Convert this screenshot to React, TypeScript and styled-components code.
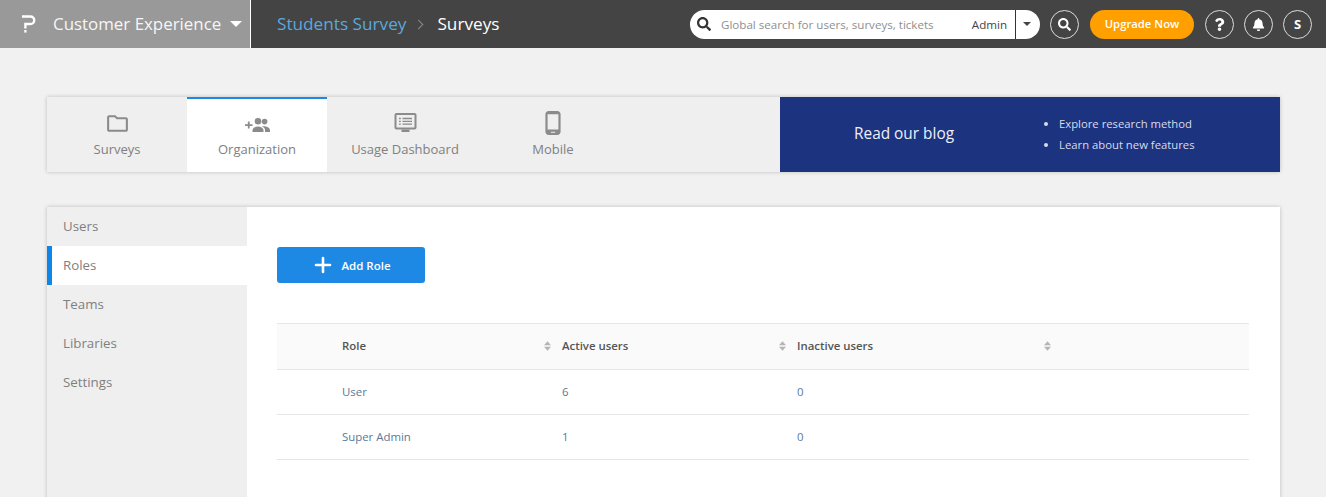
import { ReactNode } from "react";
import { createGlobalStyle, styled } from "styled-components";
import { FaBell, FaQuestion, FaSearch } from "react-icons/fa";
import { MdOutlineFolder, MdOutlinePhoneAndroid } from "react-icons/md";
import { FiPlus } from "react-icons/fi";

const GlobalStyle = createGlobalStyle`
  html, body {
    margin: 0;
    height: 100%;
    overflow: hidden;
    background: #f1f1f1;
    font-family: "Open Sans", "Noto Sans", sans-serif;
  }
  * { box-sizing: border-box; }
`;

const Header = styled.header`
  display: flex;
  align-items: center;
  height: 48px;
  background: #444;
  color: #fff;
`;

const Brand = styled.div`
  display: flex;
  align-items: center;
  width: 251px;
  height: 100%;
  padding-left: 22px;
  background: #999;
  border-right: 1px solid #fff;
`;

const BrandName = styled.span`
  margin-left: 17px;
  padding-bottom: 2px;
  font-size: 16.9px;
  color: #f6f6f6;
`;

const Caret = styled.span<{ $color?: string; $size?: number; $gap?: number }>`
  width: 0;
  height: 0;
  margin-left: ${(p) => p.$gap ?? 0}px;
  border-left: ${(p) => p.$size ?? 6}px solid transparent;
  border-right: ${(p) => p.$size ?? 6}px solid transparent;
  border-top: ${(p) => p.$size ?? 6}px solid ${(p) => p.$color ?? "#fff"};
`;

const Crumbs = styled.nav`
  display: flex;
  align-items: center;
  margin-left: 26px;
  padding-bottom: 2px;
  font-size: 17.2px;
`;

const CrumbLink = styled.a`
  color: #5aa9dc;
`;

const CrumbSep = styled.span`
  display: inline-block;
  width: 7px;
  height: 7px;
  margin: 2px 15px 0 9px;
  border-top: 1px solid #888;
  border-right: 1px solid #888;
  transform: rotate(45deg);
`;

const HeaderRight = styled.div`
  display: flex;
  align-items: center;
  margin-left: auto;
  padding-right: 14px;
`;

const SearchBox = styled.div`
  display: flex;
  align-items: center;
  width: 350px;
  height: 29px;
  padding-left: 7px;
  background: #fff;
  border-radius: 15px;
  color: #333;
  font-size: 11.6px;
`;

const SearchHint = styled.span`
  margin-left: 10px;
  color: #8f8f8f;
  flex: 1;
`;

const SearchScope = styled.span`
  padding-right: 8px;
  color: #444;
`;

const ScopeToggle = styled.span`
  display: flex;
  align-items: center;
  justify-content: center;
  width: 25px;
  height: 100%;
  padding-right: 2px;
  border-left: 1px solid #333;
`;

const RoundButton = styled.button`
  display: flex;
  align-items: center;
  justify-content: center;
  width: 29px;
  height: 29px;
  margin-left: 10px;
  padding: 0;
  background: transparent;
  border: 1px solid #ddd;
  border-radius: 50%;
  color: #fff;
  font: 700 13px "Open Sans", sans-serif;
`;

const UpgradeButton = styled.button`
  width: 104px;
  height: 29px;
  margin: 0 1px 0 11px;
  padding: 0 0 2px;
  background: #ff9f00;
  border: 0;
  border-radius: 15px;
  color: #fff;
  font: 600 11.3px "Open Sans", sans-serif;
`;

const Page = styled.main`
  padding: 49px 46px 0 47px;
`;

const TabCard = styled.section`
  display: flex;
  height: 75px;
  background: #efefef;
  box-shadow: 0 0 4px rgba(0, 0, 0, 0.22);
`;

const Tab = styled.a<{ $width: number; $active?: boolean }>`
  display: flex;
  flex-direction: column;
  align-items: center;
  width: ${(p) => p.$width}px;
  padding-top: ${(p) => (p.$active ? 12 : 14)}px;
  background: ${(p) => (p.$active ? "#fff" : "transparent")};
  border-top: ${(p) => (p.$active ? "2px solid #1e88e5" : "0")};
`;

const TabIcon = styled.span`
  display: flex;
  align-items: center;
  justify-content: center;
  height: 24px;
  color: #8b8b8b;
`;

const TabLabel = styled.span`
  margin-top: 5px;
  font-size: 13px;
  line-height: 19px;
  color: #808080;
`;

const BlogBanner = styled.aside`
  display: flex;
  align-items: center;
  width: 500px;
  margin-left: auto;
  background: #1c3380;
  color: #fff;
`;

const BlogTitle = styled.span`
  width: 262px;
  padding: 0 0 3px 74px;
  font-size: 15.4px;
  color: #eef0f8;
`;

const BlogList = styled.ul`
  margin: 0;
  padding: 0 0 2px 17px;
  font-size: 11.3px;
  line-height: 21px;
  color: #d7dcec;
`;

const ContentCard = styled.section`
  display: flex;
  height: 400px;
  margin-top: 35px;
  background: #fff;
  box-shadow: 0 0 4px rgba(0, 0, 0, 0.22);
`;

const SideNav = styled.nav`
  flex: none;
  width: 200px;
  background: #efefef;
`;

const SideItem = styled.a<{ $active?: boolean }>`
  display: flex;
  align-items: center;
  height: 39px;
  padding: 0 0 2px ${(p) => (p.$active ? 11 : 16)}px;
  background: ${(p) => (p.$active ? "#fff" : "transparent")};
  border-left: ${(p) => (p.$active ? "5px solid #0e85e8" : "0")};
  color: #7f7f7f;
  font-size: 13.3px;
`;

const Main = styled.div`
  flex: 1;
  padding: 40px 31px 0 30px;
`;

const AddButton = styled.button`
  display: flex;
  align-items: center;
  justify-content: center;
  gap: 6px;
  width: 148px;
  height: 36px;
  padding: 0;
  background: #1e88e5;
  border: 0;
  border-radius: 3px;
  color: #fff;
  font: 600 11.5px "Open Sans", sans-serif;
`;

const Table = styled.div`
  margin-top: 40px;
  border-top: 1px solid #e6e6e6;
`;

const Row = styled.div<{ $head?: boolean }>`
  display: grid;
  grid-template-columns: 280px 235px 265px 1fr;
  align-items: center;
  height: ${(p) => (p.$head ? 46 : 45)}px;
  background: ${(p) => (p.$head ? "#fafafa" : "transparent")};
  border-bottom: 1px solid #e6e6e6;
`;

const Cell = styled.div<{ $first?: boolean; $head?: boolean }>`
  display: flex;
  align-items: center;
  justify-content: space-between;
  padding: 0 6px 2px ${(p) => (p.$first ? 65 : 5)}px;
  font-size: 11.4px;
  font-weight: ${(p) => (p.$head ? 600 : 400)};
  color: ${(p) => (p.$head ? "#555" : "#5a789a")};
`;

const GroupIconFrame = styled.svg`
  margin-top: 3px;
`;

const SortMark = () => (
  <svg width="7" height="10" viewBox="0 0 8 11" fill="#b5b5b5">
    <path d="M4 0 8 4.6H0zM0 6.4h8L4 11z" />
  </svg>
);

const Logo = () => (
  <svg width="14" height="18" viewBox="0 0 14 18" fill="none" stroke="#fff" strokeWidth="2.4">
    <path d="M0 1.5h8.5a3.6 3.6 0 0 1 0 7.5H3.4v4.4" />
    <rect x="2.3" y="15" width="2.2" height="2.6" fill="#fff" stroke="none" />
  </svg>
);

const GroupAddIcon = () => (
  <GroupIconFrame width="25" height="14" viewBox="0 0 25 14" fill="#8b8b8b">
    <path d="M0 6.2h7.5V8H0zM2.85 3.4h1.8v7.2h-1.8z" />
    <circle cx="13" cy="3.3" r="3.3" />
    <path d="M7.5 14v-1.6c0-2.7 3.5-4 5.5-4s5.5 1.3 5.5 4V14z" />
    <circle cx="19.6" cy="3.6" r="2.8" />
    <path d="M17 8.5c3-.6 8 .8 8 3.7V14h-5v-1.8c0-1.5-1-2.8-3-3.7z" />
  </GroupIconFrame>
);

const DashboardIcon = () => (
  <svg width="23" height="20" viewBox="0 0 22 20" fill="none" stroke="#8b8b8b">
    <rect x="1" y="1" width="20" height="14.5" rx="1" strokeWidth="2" />
    <path d="M4.5 5.5h1.8M8 5.5h9.5M4.5 8.3h1.8M8 8.3h9.5M4.5 11.1h1.8M8 11.1h9.5" strokeWidth="1.3" />
    <path d="M7 16.5h8V19H7z" fill="#8b8b8b" stroke="none" />
  </svg>
);

type TabItem = { label: string; width: number; icon: ReactNode; active?: boolean };

const tabs: TabItem[] = [
  { label: "Surveys", width: 140, icon: <MdOutlineFolder size={25} /> },
  { label: "Organization", width: 140, icon: <GroupAddIcon />, active: true },
  { label: "Usage Dashboard", width: 156, icon: <DashboardIcon /> },
  { label: "Mobile", width: 140, icon: <MdOutlinePhoneAndroid size={26} /> },
];

const sideItems = ["Users", "Roles", "Teams", "Libraries", "Settings"];

const roles = [
  { name: "User", active: 6, inactive: 0 },
  { name: "Super Admin", active: 1, inactive: 0 },
];

export default function App() {
  return (
    <>
      <GlobalStyle />
      <Header>
        <Brand>
          <Logo />
          <BrandName>Customer Experience</BrandName>
          <Caret $gap={9} />
        </Brand>
        <Crumbs>
          <CrumbLink>Students Survey</CrumbLink>
          <CrumbSep />
          <span>Surveys</span>
        </Crumbs>
        <HeaderRight>
          <SearchBox>
            <FaSearch size={14} color="#333" />
            <SearchHint>Global search for users, surveys, tickets</SearchHint>
            <SearchScope>Admin</SearchScope>
            <ScopeToggle>
              <Caret $color="#444" $size={4} />
            </ScopeToggle>
          </SearchBox>
          <RoundButton>
            <FaSearch size={13} />
          </RoundButton>
          <UpgradeButton>Upgrade Now</UpgradeButton>
          <RoundButton>
            <FaQuestion size={13} />
          </RoundButton>
          <RoundButton>
            <FaBell size={13} />
          </RoundButton>
          <RoundButton>S</RoundButton>
        </HeaderRight>
      </Header>
      <Page>
        <TabCard>
          {tabs.map((tab) => (
            <Tab key={tab.label} $width={tab.width} $active={tab.active}>
              <TabIcon>{tab.icon}</TabIcon>
              <TabLabel>{tab.label}</TabLabel>
            </Tab>
          ))}
          <BlogBanner>
            <BlogTitle>Read our blog</BlogTitle>
            <BlogList>
              <li>Explore research method</li>
              <li>Learn about new features</li>
            </BlogList>
          </BlogBanner>
        </TabCard>
        <ContentCard>
          <SideNav>
            {sideItems.map((item) => (
              <SideItem key={item} $active={item === "Roles"}>
                {item}
              </SideItem>
            ))}
          </SideNav>
          <Main>
            <AddButton>
              <FiPlus size={24} strokeWidth={2.6} />
              Add Role
            </AddButton>
            <Table>
              <Row $head>
                <Cell $first $head>
                  Role
                  <SortMark />
                </Cell>
                <Cell $head>
                  Active users
                  <SortMark />
                </Cell>
                <Cell $head>
                  Inactive users
                  <SortMark />
                </Cell>
              </Row>
              {roles.map((role) => (
                <Row key={role.name}>
                  <Cell $first>{role.name}</Cell>
                  <Cell>{role.active}</Cell>
                  <Cell>{role.inactive}</Cell>
                </Row>
              ))}
            </Table>
          </Main>
        </ContentCard>
      </Page>
    </>
  );
}
